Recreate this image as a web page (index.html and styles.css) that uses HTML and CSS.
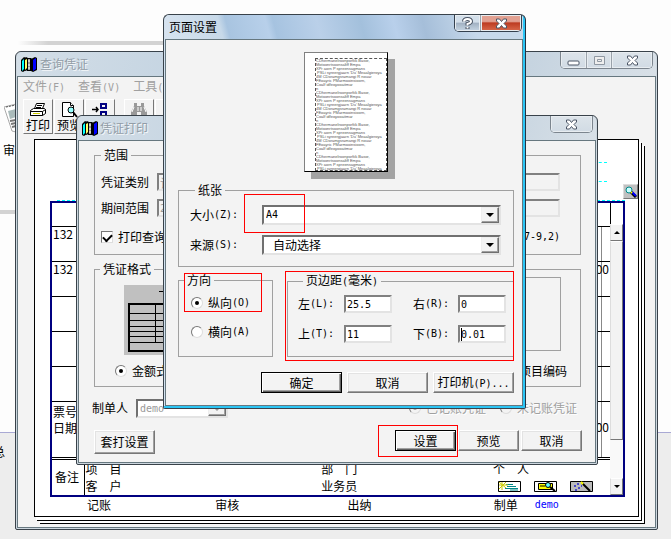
FILE: index.html
```html
<!DOCTYPE html>
<html lang="zh-CN">
<head>
<meta charset="utf-8">
<title>查询凭证</title>
<link rel="stylesheet" href="styles.css">
</head>
<body>
<svg width="0" height="0" class="defs" aria-hidden="true">
  <symbol id="books" viewBox="0 0 16 16">
    <path d="M0 4l3-3 2 1v12l-3 2-2-1z" fill="#000"/><path d="M1 5l2-2v10l-2 2z" fill="#0ff"/>
    <path d="M3 3l2-2 2 1v11l-2 2-2-1z" fill="#000"/><path d="M4 4l2-1v9l-2 2z" fill="#ff6"/>
    <path d="M6 2h4l1 1v11l-1 1H6z" fill="#000"/><path d="M7 3h2v11H7z" fill="#999"/><path d="M7 5h2M7 9h2M7 12h2" stroke="#fff"/>
    <path d="M10 3l4-2 2 1v12l-4 2-2-1z" fill="#000"/><path d="M12 4l3-2v11l-3 2z" fill="#00f"/>
  </symbol>
  <symbol id="cross" viewBox="0 0 13 11">
    <path d="M1.500 1h3l2 2.500L8.500 1h3v2L9 5.500 11.500 8v2h-3l-2-2.500L4.500 10h-3V8L4 5.500 1.500 3z" fill="#fff" stroke="#4b5565"/>
  </symbol>
</svg>

<main class="desktop">
  <div class="band band-top"></div>
  <div class="band band-left"></div>
  <svg class="clip-icon" width="12" height="30" viewBox="0 0 12 30"><path d="M0 4L12 1V29L8 28z" fill="#fff" stroke="#aaa"/><path d="M2 4L12 2" stroke="#555" stroke-dasharray="2 1"/><path d="M4 8l8-2v8l-6 2z" fill="#abb"/><path d="M6 18l6-1M7 21l5-1M8 24l4-1" stroke="#777" stroke-width="2"/></svg>
  <span class="stray stray-a">审</span>
  <span class="stray stray-b">总</span>

  <section class="window win-query">
    <header class="titlebar">
      <svg class="app" width="16" height="16"><use href="#books"/></svg>
      <h1>查询凭证</h1>
      <div class="caption">
        <button class="cap" aria-label="最小化"><svg width="13" height="11"><rect x="1" y="6" width="11" height="4" rx="1" fill="#fff" stroke="#4b5565"/></svg></button>
        <button class="cap" aria-label="最大化"><svg width="13" height="11"><path d="M1.500 1.500h10v8h-10zM4.500 4.500h4v2h-4z" fill="#eee" stroke="#8f98a2"/></svg></button>
        <button class="cap wide" aria-label="关闭"><svg width="13" height="11"><use href="#cross"/></svg></button>
      </div>
    </header>
    <div class="client">
      <nav class="menu"><a href="#">文件<span class="en">(F)</span></a><a href="#">查看<span class="en">(V)</span></a><a href="#">工具<span class="en">(T)</span></a></nav>
      <div class="tools">
        <button class="tool"><svg width="18" height="16" viewBox="0 0 18 16" fill="#fff" stroke="#000"><path d="M5.500 6.500l2-5h8l-2 5M1.500 8.500l3-2h11l1 1v4l-3 2h-12z"/><path d="M1.500 9.500h12v4h-12zM13.500 9.500l3-2M8 3.500h5M7 5.500h5"/><path d="M4 11.500h7" stroke="#cc0"/></svg>打印</button>
        <button class="tool"><svg width="18" height="16" viewBox="0 0 18 16" fill="#fff" stroke="#000"><path d="M2.500.500h8l3 3v11h-11z"/><path d="M10.500.500v3h3"/><circle cx="11" cy="8" r="3" fill="#9ff"/><path d="M13 10l4 5" stroke-width="2"/></svg>预览</button>
        <button class="tool" aria-label="插入"><svg width="18" height="16" viewBox="0 0 18 16" fill="none"><path d="M1 7.500h6M5 5l2 2.500L5 10" stroke="#000" stroke-width="1.500"/><path d="M10 2h5v4h-5zM10 10h5v4h-5z" stroke="#000080" stroke-width="2"/></svg></button>
        <button class="tool apart" aria-label="查找"><svg width="18" height="16" viewBox="0 0 18 16" fill="#999"><path d="M4 1h3v3h4V1h3v3l3 6v5h-6v-5H7v5H1v-5l3-6z"/><path d="M4 5L2 10M8 5v4M11 5v4M14 5l2 5" stroke="#fff"/></svg></button>
        <button class="tool" aria-label="更多"></button>
      </div>
      <div class="paper">
        <div class="paper-head">
          <div class="dash"></div><div class="dash"></div><div class="dash full"></div>
          <button class="lens" aria-label="放大"><svg width="12" height="12" viewBox="0 0 12 12"><circle cx="4" cy="4" r="3" fill="#cff" stroke="#088"/><path d="M6 6l5 5" stroke="#000" stroke-width="3"/><path d="M7 6l4 4" stroke="#00f" stroke-width="2"/><path d="M6 6l1 1" stroke="#ff0" stroke-width="2"/></svg></button>
        </div>
        <div class="voucher">
          <table>
            <tbody>
              <tr class="first"><td></td><td></td></tr>
              <tr class="row"><td>132</td><td class="sum"></td></tr>
              <tr class="row"><td>132</td><td class="sum">00</td></tr>
              <tr class="row"><td></td><td class="sum"></td></tr>
              <tr class="row"><td></td><td class="sum"></td></tr>
              <tr class="row"><td></td><td class="sum"></td></tr>
              <tr class="bill"><td>票号<br>日期</td><td class="sum">00</td></tr>
              <tr class="memo"><td>备注</td><td>
                <div class="memo-grid"><span>项　目</span><span>部　门</span><span>个　人</span><span>客　户</span><span>业务员</span>
                  <span class="icons">
                    <svg width="23" height="11"><path d="M.500.500h22v10H.500z" fill="#fff" stroke="#000"/><path d="M8 3.500h7M9 5.500h9M7 7.500h13M12 9h8" stroke="#088"/><path d="M1 1l7 6M8 1L1 8M4 1v8M1 4h9" stroke="#cc0"/></svg>
                    <svg width="23" height="11"><path d="M.500.500h22v10H.500z" fill="#fff" stroke="#000"/><path d="M4.500 2.500h14v6h-14z" fill="#ff0" stroke="#000"/><path d="M6 5h5" stroke="#000"/><circle cx="14" cy="4" r="2.500" fill="#6ff" stroke="#000"/><path d="M16 6l5 4" stroke="#000" stroke-width="2"/></svg>
                    <svg width="23" height="11"><path d="M.500.500h22v10H.500z" fill="#bbb" stroke="#000"/><path d="M12 2l8 8" stroke="#000" stroke-width="2"/><path d="M11 1l2 2" stroke="#ff0" stroke-width="2"/><path d="M4 5h2M7 3h2M8 7h2M5 9h2M11 5h1" stroke="#22c" stroke-width="1.500"/></svg>
                  </span></div>
              </td></tr>
            </tbody>
          </table>
          <div class="scroll"><span class="gap"></span><button class="sb up" aria-label="向上"></button><span class="thumb"></span><span class="track"></span><button class="sb down" aria-label="向下"></button></div>
        </div>
        <div class="sign"><span>记账</span><span>审核</span><span>出纳</span><span>制单</span><span class="en user">demo</span></div>
      </div>
    </div>
  </section>

  <section class="window win-print">
    <header class="titlebar">
      <svg class="app" width="16" height="16"><use href="#books"/></svg>
      <h1>凭证打印</h1>
      <div class="caption"><button class="cap wide" aria-label="关闭"><svg width="13" height="11"><use href="#cross"/></svg></button></div>
    </header>
    <div class="client print-body">
      <fieldset class="range">
        <legend>范围</legend>
        <div class="field-row"><label for="kind">凭证类别</label><input id="kind" class="box dim" value="记"></div>
        <div class="field-row"><label for="period">期间范围</label><input id="period" class="box dim en" value="2"></div>
        <div class="check-row"><label><input type="checkbox" checked>打印查询</label><span class="en">7-9,2)</span></div>
      </fieldset>
      <fieldset class="format">
        <legend>凭证格式</legend>
        <div class="format-row">
          <svg class="thumbnail" width="82" height="70"><rect width="82" height="70" fill="#c0c0c0"/><path d="M35 6.500h12" stroke="#000"/><rect x="5" y="19" width="72" height="47" fill="none" stroke="#000" stroke-width="2"/><path d="M5 28.500h72M5 35.500h72M5 41.500h72M5 46.500h72M5 51.500h72M5 57.500h72M31.500 19v38" stroke="#000"/></svg>
          <div class="well"></div>
        </div>
        <div class="format-pick"><label><input type="radio" name="fmt" checked>金额式</label><span>项目编码</span></div>
      </fieldset>
      <div class="maker">
        <label for="maker">制单人</label>
        <span class="combo small"><select id="maker" class="en" disabled><option>demo</option></select></span>
        <label class="off r1"><input type="radio" name="st" checked disabled>已记账凭证</label>
        <label class="off"><input type="radio" name="st" disabled>未记账凭证</label>
      </div>
      <div class="print-actions"><button class="btn tall">套打设置</button><button class="btn main">设置</button><button class="btn">预览</button><button class="btn last">取消</button></div>
    </div>
  </section>

  <section class="window win-setup">
    <header class="titlebar">
      <h1>页面设置</h1>
      <div class="caption">
        <button class="cap" aria-label="帮助"><svg width="11" height="13" viewBox="0 0 11 13"><path d="M2 4.500Q2 2 5.500 2T9 4.500Q9 6 5.500 7v1.500M5.500 10v2" fill="none" stroke="#4b5565" stroke-width="4"/><path d="M2 4.500Q2 2 5.500 2T9 4.500Q9 6 5.500 7v1.500M5.500 10v1.500" fill="none" stroke="#fff" stroke-width="2"/></svg></button>
        <button class="cap wide red" aria-label="关闭"><svg width="13" height="11"><use href="#cross"/></svg></button>
      </div>
    </header>
    <div class="client setup-body">
      <div class="sheet"><pre>CDhermanelroonporfiik Basor,
Motoonrtsoonsaltff Empa
XPr aorn P spreensagmans
 PSLi syreergjaarn 'Du' Meaalgieroya
4M CDoramgsramangi R nouar
FEoayric PMarmooinsioorn,
Coalf idfeoyooaitmar
n
CDhermanelroonporfiik Basor,
Motoonrtsoonsaltff Empa
XPr aorn P spreensagmans
 PSLi syreergjaarn 'Du' Meaalgieroya
4M CDoramgsramangi R nouar
FEoayric PMarmooinsioorn,
Coalf idfeoyooaitmar
n
CDhermanelroonporfiik Basor,
Motoonrtsoonsaltff Empa
XPr aorn P spreensagmans
 PSLi syreergjaarn 'Du' Meaalgieroya
4M CDoramgsramangi R nouar
FEoayric PMarmooinsioorn,
Coalf idfeoyooaitmar
n
CDhermanelroonporfiik Basor,
Motoonrtsoonsaltff Empa
XPr aorn P spreensagmans
 PSLi syreergjaarn 'Du' Meaalgieroya</pre></div>
      <fieldset class="stock">
        <legend>纸张</legend>
        <div class="stock-row"><label for="size">大小<span class="en">(Z):</span></label><span class="combo"><select id="size" class="en"><option>A4</option></select></span></div>
        <div class="stock-row"><label for="source">来源<span class="en">(S):</span></label><span class="combo"><select id="source" class="indent"><option>自动选择</option></select></span></div>
      </fieldset>
      <div class="pair">
        <fieldset class="orient">
          <legend>方向</legend>
          <label><input type="radio" name="dir" checked>纵向<span class="en">(O)</span></label>
          <label><input type="radio" name="dir">横向<span class="en">(A)</span></label>
        </fieldset>
        <fieldset class="margins">
          <legend>页边距<span class="en">(</span>毫米<span class="en">)</span></legend>
          <label for="ml">左<span class="en">(L):</span></label><input id="ml" class="box en" value="25.5">
          <label for="mr" class="second">右<span class="en">(R):</span></label><input id="mr" class="box en" value="0">
          <label for="mt">上<span class="en">(T):</span></label><input id="mt" class="box en" value="11">
          <label for="mb" class="second">下<span class="en">(B):</span></label><span class="caret"><input id="mb" class="box en" value="0.01"></span>
        </fieldset>
      </div>
      <div class="setup-actions"><button class="btn main">确定</button><button class="btn">取消</button><button class="btn">打印机<span class="en">(P)...</span></button></div>
    </div>
  </section>

  <div class="mark mark-size"></div><div class="mark mark-dir"></div><div class="mark mark-margin"></div><div class="mark mark-set"></div>
</main>
</body>
</html>
```
FILE: styles.css
```css
* { box-sizing: border-box; }
body {
  margin: 0;
  min-height: 100vh;
  background: linear-gradient(#fdfdfd 432px, #a9a9d4 432px, #a9a9d4 433px, #ededed 433px);
  font: 12px/16px "Noto Sans CJK SC", sans-serif;
  color: #000;
}
button, input, select { font: inherit; color: inherit; margin: 0; }
a { color: inherit; text-decoration: none; }
svg { display: block; flex: none; }
.defs { position: absolute; }
.en, input.en, select.en { font-family: "DejaVu Sans Mono", monospace; font-size: 10px; }
.desktop { position: relative; min-height: 100vh; overflow: hidden; }

/* desktop behind the windows */
.band { position: absolute; background: #d3d3d3; }
.band-top { left: 18px; top: 41px; width: 472px; height: 4px; background: linear-gradient(90deg, #fdfdfd, #d3d3d3 30px); }
.band-left { left: 0; top: 210px; width: 16px; height: 4px; }
.clip-icon { position: absolute; left: 4px; top: 103px; }
.stray { position: absolute; }
.stray-a { left: 3px; top: 142px; }
.stray-b { left: -7px; top: 444px; }

/* window frame */
.window {
  position: absolute;
  display: flex;
  flex-direction: column;
  border: 1px solid #39424a;
  border-radius: 6px 6px 2px 2px;
  padding: 0 1px 1px;
  background: #cdd7df;
}
.win-query { left: 15px; right: 13px; top: 51px; }
.win-print { left: 76px; top: 115px; width: 522px; }
.win-setup { left: 163px; top: 14px; width: 363px; background: #d3e2f0; border-right-color: #234; box-shadow: inset -1px -1px #2bc5f5, inset -2px -2px #2bc5f5; padding: 0 2px 2px 1px; }
.titlebar {
  display: flex;
  align-items: flex-start;
  height: 24px;
  padding-left: 4px;
  border-radius: 5px 5px 0 0;
  background: linear-gradient(105deg, #d3dee7, #c3d3e1 30%, #d0dbe4 60%, #c6d4e0 80%, #d8e0e7);
  color: #929da7;
  text-shadow: 1px 1px #f4f7f9;
}
.win-setup .titlebar { background: linear-gradient(75deg, #d7e3ef, #c7d9e9 16%, #a8c4e0 18%, #b8d0ea 29%, #a6c3e0 31%, #bad0e9 43%, #a3c0dc 55%, #b9d0eb 64%, #a5bed9 72%, #c7d9eb 86%); color: #000; text-shadow: none; padding-left: 4px; }
.titlebar h1 { margin: 0; font: inherit; line-height: 24px; }
.app { margin: 4px 3px 0 0; }
.win-print .app { margin-right: 2px; }
.caption { display: flex; margin: 0 3px 0 auto; border: 1px solid #7c858e; border-top: 0; border-radius: 0 0 5px 5px; overflow: hidden; }
.cap { display: flex; align-items: center; justify-content: center; width: 25px; height: 16px; padding: 0; border: 0; background: linear-gradient(#dde4ea, #d1dbe4); box-shadow: inset 0 0 0 1px #e8edf1; }
.cap + .cap { border-left: 1px solid #9aa2aa; }
.cap.wide { width: 41px; }
.win-setup .caption { margin-right: 1px; border-color: #34404e; }
.win-setup .cap { background: linear-gradient(#d3dfea 45%, #a1b1c2 50%, #c7d6e4); }
.win-setup .cap.red { background: linear-gradient(#e2a192 40%, #bd3c22 50%, #d96a4c); }
.client { border: 1px solid #66777f; background: #f3f3f3; }

/* voucher window */
.menu { display: flex; gap: 13px; padding: 1px 5px 0; height: 21px; color: #a0a0a0; }
.tools { display: flex; gap: 1px; padding: 1px 5px 5px; }
.tool { display: flex; flex-direction: column; align-items: center; width: 30px; height: 35px; padding: 2px 0 0; line-height: 14px; background: #f3f3f3; border: 1px solid; border-color: #fff #777 #777 #fff; white-space: nowrap; }
.tool.apart { margin-left: 8px; }
.paper {
  margin: 0 16px 10px 16px;
  border: 1px solid #000;
  background: #fff;
  box-shadow: 2px 3px #fff, 3px 4px #000, 5px 6px #fff, 6px 7px #000;
}
.paper-head { position: relative; padding: 22px 13px 0 22px; }
.dash { width: 24px; height: 19px; border-top: 1px dashed #0ff; margin: 0 18px 0 auto; }
.dash.full { width: auto; height: 1px; margin: 0; }
.lens { position: absolute; right: 0; top: 44px; width: 15px; height: 15px; padding: 1px; border: 1px solid; border-color: #ddd #777 #777 #ddd; background: #c0c0c0; }
.voucher { display: flex; margin: 0 13px 0 15px; border: 2px solid #000080; }
.voucher table { flex: 1; border-collapse: collapse; table-layout: fixed; }
.voucher td { padding: 0 1px; vertical-align: top; border-bottom: 1px solid #000; }
.voucher td:first-child { width: 32px; }
.first td { height: 23px; }
.row td { height: 35px; line-height: 14px; }
.bill td { height: 57px; }
.sum { text-align: right; background: linear-gradient(#888, #888) right 8px top / 1px 100% no-repeat; }
.voucher .bill td { padding-top: 2px; border-bottom: 3px double #000; }
.voucher .bill .sum { padding-top: 17px; }
.voucher .memo td { height: 37px; border: 0; }
.voucher .memo td:first-child { padding: 9px 3px 0; border-right: 1px solid #000; }
.memo-grid { display: grid; grid-template-columns: 236fr 172fr 116fr; line-height: 17px; }
.icons { display: flex; gap: 13px; align-items: center; padding: 3px 0 0 5px; }
.scroll { display: flex; flex-direction: column; width: 13px; background: #f9f9f9; }
.gap { height: 21px; border-left: 1px solid #000; background: #fff; }
.sb { display: flex; align-items: center; justify-content: center; height: 17px; padding: 0; border: 1px solid; border-color: #fff #777 #777 #ddd; background: #f3f3f3; }
.sb::after { content: ""; border: 3px solid transparent; }
.up::after { border-bottom-color: #000; border-top: 0; }
.down::after { border-top-color: #000; border-bottom: 0; }
.thumb { height: 199px; border: 1px solid; border-color: #fff #777 #777 #ddd; background: #f3f3f3; }
.track { flex: 1; }
.sign { display: grid; grid-template-columns: 128fr 132fr 146fr 41fr 103fr; margin-left: 52px; height: 19px; }
.user { color: #00f; }

/* groups and fields */
fieldset { margin: 0; border: 1px solid #a0a0a0; padding: 0; min-width: 0; }
legend { margin-left: 5px; padding: 0 3px; line-height: 12px; }
.box { height: 18px; min-width: 0; padding: 0 1px; border: 2px solid; border-color: #808080 #e3e3e3 #e3e3e3 #808080; border-radius: 0; background: #fff; }
.box.dim { color: #999; background: #f3f3f3; flex: 1; }
label { display: flex; align-items: center; white-space: nowrap; }
input[type="radio"], input[type="checkbox"] { appearance: none; display: grid; place-items: center; width: 12px; height: 12px; margin-right: 5px; border: 1px solid; border-color: #777 #ddd #ddd #777; background: #fff; }
input[type="radio"] { border-radius: 50%; }
input[type="radio"]:disabled { background: #f3f3f3; }
input[type="radio"]:checked::after { content: ""; width: 4px; height: 4px; border-radius: 50%; background: currentColor; }
input[type="checkbox"]:checked::after { content: ""; width: 7px; height: 4px; border: solid #000; border-width: 0 0 2px 2px; transform: rotate(-45deg); }
.combo { position: relative; display: flex; flex: 1; height: 20px; border: 2px solid; border-color: #707070 #e3e3e3 #e3e3e3 #707070; background: #fff; }
.combo select { position: relative; appearance: none; flex: 1; min-width: 0; padding: 0 2px; border: 0; border-radius: 0; background: transparent; opacity: 1; }
.combo select.indent { padding-left: 9px; }
.combo::before { content: ""; position: absolute; right: 0; top: 0; bottom: 0; width: 16px; border: 1px solid; border-color: #eee #707070 #707070 #eee; background: #f3f3f3; box-shadow: inset -1px -1px #a0a0a0; }
.combo::after { content: ""; position: absolute; right: 5px; top: 6px; border: 4px solid transparent; border-top-color: #000; border-bottom: 0; pointer-events: none; }
.btn { height: 21px; width: 61px; padding: 0; line-height: 16px; white-space: nowrap; background: #f3f3f3; border: 1px solid; border-color: #fff #777 #777 #fff; box-shadow: inset -1px -1px #a0a0a0, inset 1px 1px #e3e3e3; }
.btn.main { border: 1px solid #000; box-shadow: inset 1px 1px #fff, inset -1px -1px #606060, inset -2px -2px #a0a0a0; }

/* print window */
.print-body { padding: 8px 14px 8px 15px; }
.range { height: 106px; padding: 12px 20px 0 6px; }
.field-row { display: flex; align-items: center; margin-bottom: 8px; }
.field-row label { width: 56px; }
.range legend { margin-left: 0; }
.check-row { display: flex; justify-content: space-between; align-items: center; padding-top: 4px; }
.format { height: 124px; margin-top: 8px; }
.format-row { display: flex; padding: 2px 19px 0 29px; }
.thumbnail { margin-top: 8px; }
.well { flex: 1; height: 74px; margin-left: 40px; border: 1px solid #a0a0a0; }
.format-pick { display: flex; justify-content: space-between; padding: 8px 13px 0 20px; }
.maker { display: flex; align-items: center; margin: 11px 4px 0 -2px; height: 20px; }
.maker > label:first-child { width: 44px; }
.combo.small { flex: 0 0 92px; height: 19px; color: #999; }
.combo.small::after { border-top-color: #999; }
.off { color: #a0a0a0; text-shadow: 1px 1px #fff; }
.off.r1 { margin: 0 14px 0 auto; }
.print-actions { display: flex; gap: 2px; margin: 12px -1px 0 0; }
.btn.tall { height: 24px; margin-right: auto; }

/* page setup window */
.setup-body { padding: 12px 8px 12px 12px; }
.sheet { width: 84px; height: 120px; margin: 0 auto 12px 126px; padding: 5px 0 1px 10px; border: 1px solid #808080; border-right-color: #000; border-bottom-color: #000; background: #fff; box-shadow: 7px 7px #a3a3a3; }
.sheet pre { height: 113px; margin: 0; overflow: hidden; border: 1px dashed #555; font: 4px/4px "Liberation Sans", sans-serif; color: #555; }
.stock { height: 83px; padding: 9px 12px 0 11px; }
.stock-row { display: flex; align-items: center; margin-bottom: 10px; }
.stock-row label { width: 72px; }
.pair { display: flex; gap: 14px; margin-top: 7px; }
.orient { flex: 0 0 95px; height: 83px; }
.orient label { height: 16px; margin: 9px 0 13px 12px; }
.margins { flex: 1; display: grid; grid-template-columns: 46px 48px 66px 48px; gap: 12px 0; align-content: start; padding: 7px 0 0 10px; }
.margins .second { margin-left: 21px; }
.margins .box { width: 48px; }
.caret { position: relative; display: flex; }
.caret::after { content: ""; position: absolute; left: 3px; top: 3px; width: 1px; height: 13px; background: #000; }
.setup-actions { display: flex; justify-content: flex-end; gap: 5px; margin-top: 15px; }
.setup-actions .btn { width: 81px; }

/* red annotation boxes */
.mark { position: absolute; border: 1px solid #f00; pointer-events: none; }
.mark-size { left: 244px; top: 194px; width: 61px; height: 39px; }
.mark-dir { left: 184px; top: 273px; width: 78px; height: 39px; }
.mark-margin { left: 285px; top: 271px; width: 229px; height: 90px; }
.mark-set { left: 378px; top: 425px; width: 80px; height: 32px; }
```
